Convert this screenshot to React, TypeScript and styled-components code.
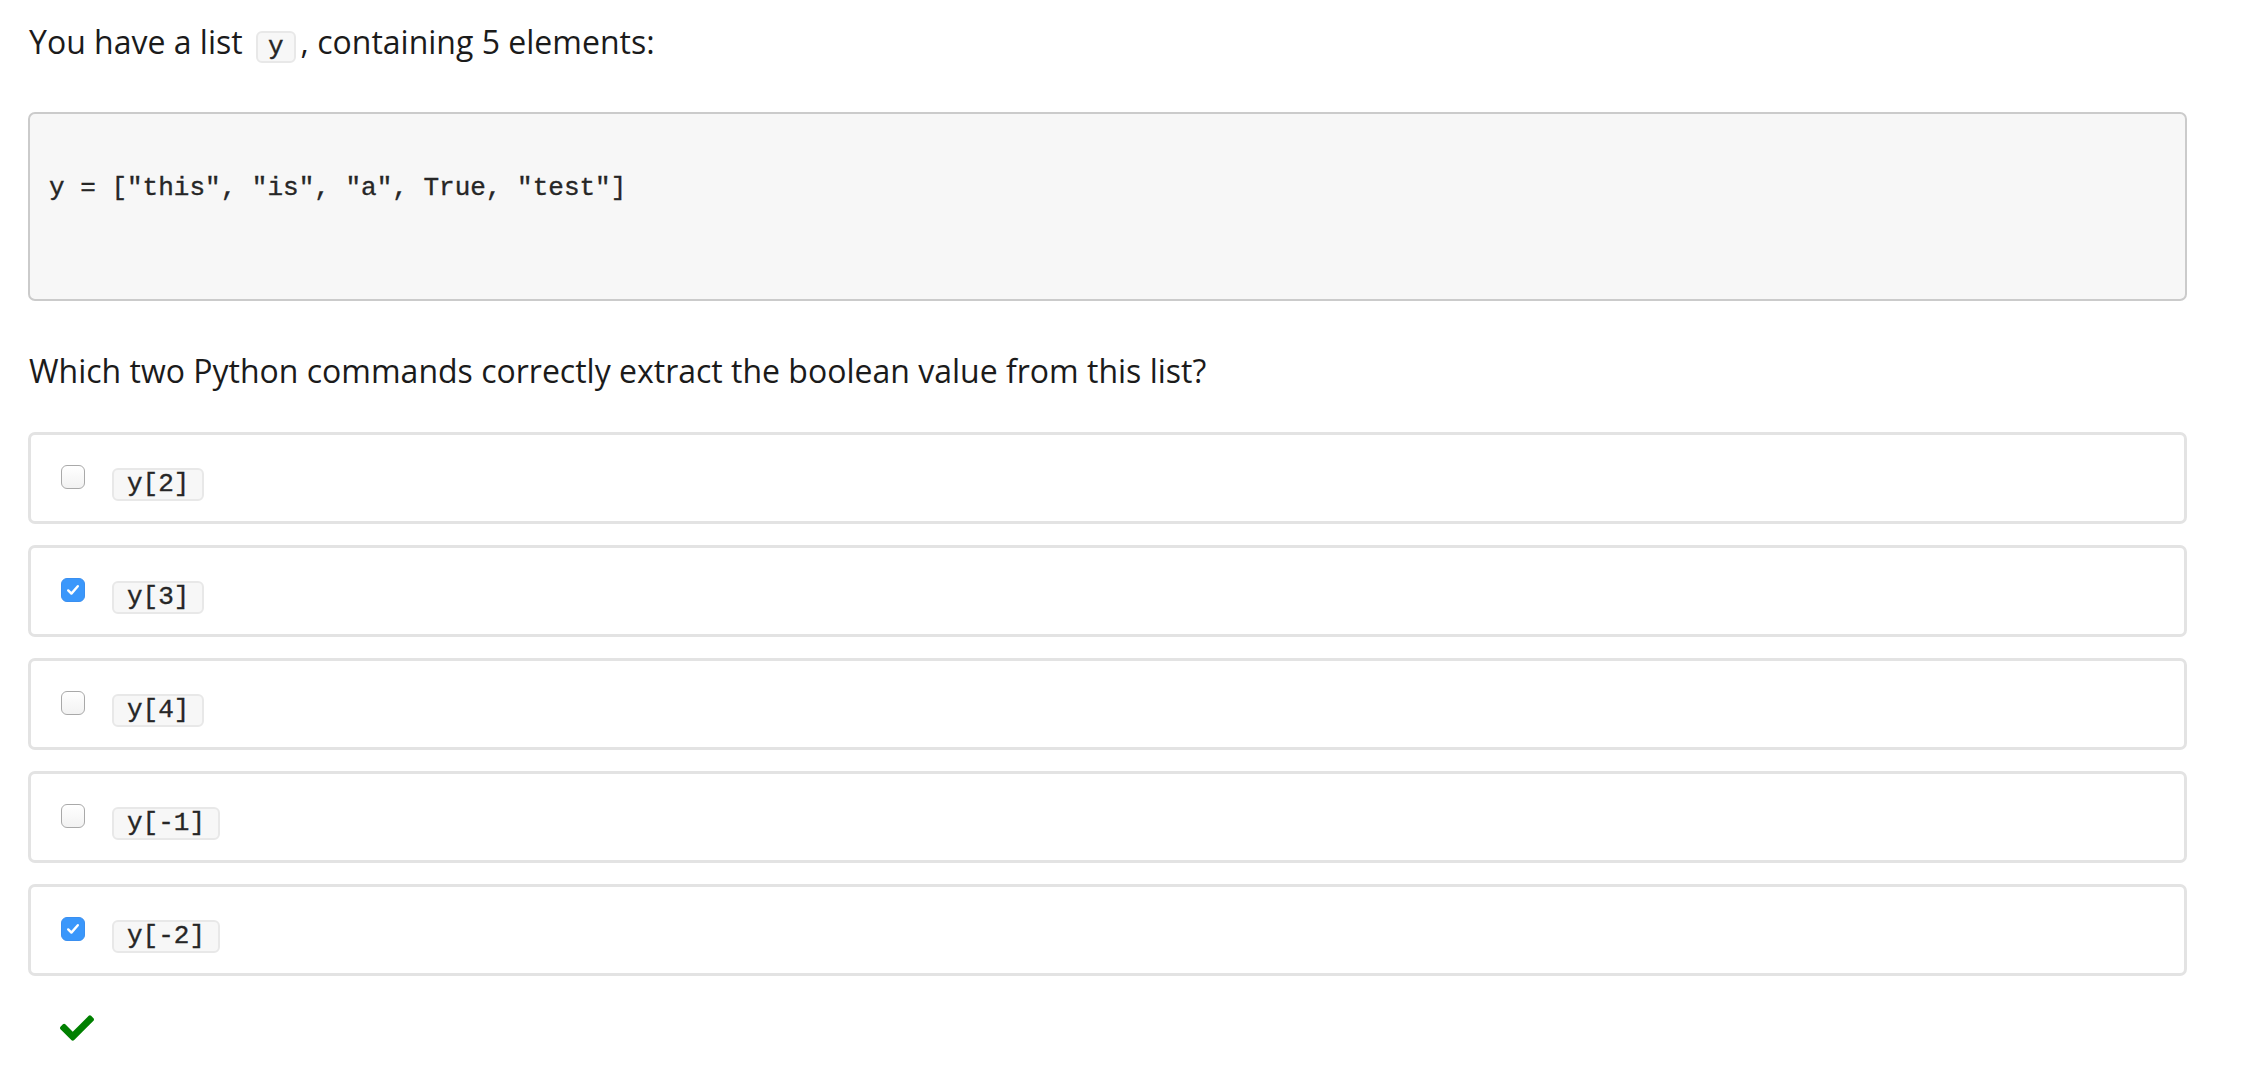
import React from "react";
import styled, { createGlobalStyle } from "styled-components";
import { FaCheck } from "react-icons/fa";

const GlobalStyle = createGlobalStyle`
  html, body {
    margin: 0;
    padding: 0;
    background: #ffffff;
  }
  body {
    font-family: "Open Sans", "Noto Sans", sans-serif;
    color: #1b1b1b;
  }
`;

const Page = styled.div`
  width: 2159px;
  margin-left: 28px;
  padding-top: 19px;
  display: flex;
  flex-direction: column;
`;

const Paragraph = styled.p<{ $gapAfter: number }>`
  margin: 0 0 ${(p) => p.$gapAfter}px 1px;
  font-size: 32px;
  line-height: 46px;
  color: #1b1b1b;
`;

const mono = `
  font-family: "Liberation Mono", "Courier New", monospace;
  font-size: 26px;
  color: #262626;
  -webkit-text-stroke: 0.35px #262626;
`;

const InlineCode = styled.code`
  ${mono}
  display: inline-block;
  line-height: 28px;
  padding: 0 10px;
  margin: 0 5px 0 5px;
  background: #f7f7f7;
  border: 2px solid #e8e8e8;
  border-radius: 6px;
`;

const CodeBlock = styled.pre`
  ${mono}
  margin: 0 0 47px 0;
  padding: 56px 19px 92px 19px;
  background: #f7f7f7;
  border: 2px solid #cbcbcb;
  border-radius: 7px;
  line-height: 37px;
`;

const OptionList = styled.div`
  display: flex;
  flex-direction: column;
  gap: 21px;
`;

const OptionRow = styled.label`
  box-sizing: border-box;
  height: 92px;
  border: 3px solid #e3e3e3;
  border-radius: 7px;
  padding: 30px;
  display: flex;
  align-items: flex-start;
  gap: 27px;
  background: #ffffff;
`;

const Box = styled.span<{ $checked: boolean }>`
  box-sizing: border-box;
  width: 24px;
  height: 24px;
  border-radius: 6px;
  flex: none;
  display: flex;
  align-items: center;
  justify-content: center;
  background: ${(p) =>
    p.$checked ? "#3a97fb" : "linear-gradient(#ffffff, #f2f2f2)"};
  border: ${(p) => (p.$checked ? "1px solid #3a8ff0" : "1.5px solid #a9a9a9")};
`;

const OptionCode = styled.code`
  ${mono}
  display: inline-block;
  margin-top: 3px;
  line-height: 29px;
  padding: 0 13px;
  background: #f7f7f7;
  border: 2px solid #e8e8e8;
  border-radius: 6px;
`;

const Result = styled.div`
  margin-top: 35px;
  margin-left: 32px;
  color: #008000;
  display: flex;
`;

const CheckMark = () => (
  <svg width="16" height="14" viewBox="0 0 16 14" aria-hidden="true">
    <path
      d="M3.2 7.4 L6.4 10.6 L12.8 3.2"
      fill="none"
      stroke="#ffffff"
      strokeWidth="2.4"
      strokeLinecap="round"
      strokeLinejoin="round"
    />
  </svg>
);

const options = [
  { code: "y[2]", checked: false },
  { code: "y[3]", checked: true },
  { code: "y[4]", checked: false },
  { code: "y[-1]", checked: false },
  { code: "y[-2]", checked: true },
];

export default function App() {
  return (
    <>
      <GlobalStyle />
      <Page>
        <Paragraph $gapAfter={47}>
          You have a list <InlineCode>y</InlineCode>, containing 5 elements:
        </Paragraph>
        <CodeBlock>{`y = ["this", "is", "a", True, "test"]`}</CodeBlock>
        <Paragraph $gapAfter={38}>
          Which two Python commands correctly extract the boolean value from
          this list?
        </Paragraph>
        <OptionList>
          {options.map((o) => (
            <OptionRow key={o.code}>
              <Box $checked={o.checked}>{o.checked && <CheckMark />}</Box>
              <OptionCode>{o.code}</OptionCode>
            </OptionRow>
          ))}
        </OptionList>
        <Result>
          <FaCheck size={34} />
        </Result>
      </Page>
    </>
  );
}
